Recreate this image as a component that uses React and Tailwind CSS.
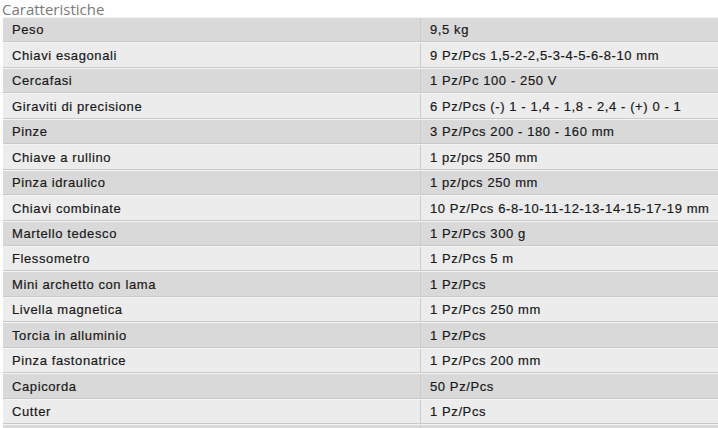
import React from 'react';

const rows = [
  ['Peso', '9,5 kg'],
  ['Chiavi esagonali', '9 Pz/Pcs 1,5-2-2,5-3-4-5-6-8-10 mm'],
  ['Cercafasi', '1 Pz/Pc 100 - 250 V'],
  ['Giraviti di precisione', '6 Pz/Pcs (-) 1 - 1,4 - 1,8 - 2,4 - (+) 0 - 1'],
  ['Pinze', '3 Pz/Pcs 200 - 180 - 160 mm'],
  ['Chiave a rullino', '1 pz/pcs 250 mm'],
  ['Pinza idraulico', '1 pz/pcs 250 mm'],
  ['Chiavi combinate', '10 Pz/Pcs 6-8-10-11-12-13-14-15-17-19 mm'],
  ['Martello tedesco', '1 Pz/Pcs 300 g'],
  ['Flessometro', '1 Pz/Pcs 5 m'],
  ['Mini archetto con lama', '1 Pz/Pcs'],
  ['Livella magnetica', '1 Pz/Pcs 250 mm'],
  ['Torcia in alluminio', '1 Pz/Pcs'],
  ['Pinza fastonatrice', '1 Pz/Pcs 200 mm'],
  ['Capicorda', '50 Pz/Pcs'],
  ['Cutter', '1 Pz/Pcs'],
  ['', ''],
];

const App = () => {
  return (
    <div className="w-[718px] h-[428px] overflow-hidden bg-white">
      <div className="pl-[2px] h-[17px] text-[15px] leading-[18px] text-[#7a7a7a] font-['Open_Sans',sans-serif]">
        Caratteristiche
      </div>
      <div className="ml-[3px] font-['Liberation_Sans',Arial,sans-serif] text-[13px] text-[#1a1a1a] tracking-[0.6px] [-webkit-text-stroke:0.2px_#1a1a1a]">
        {rows.map(([k, v], i) => (
          <div
            key={i}
            className={`flex h-[25.45px] border-t border-t-[#f4f4f4] border-b border-b-[#c9c9c9] ${i % 2 === 0 ? 'bg-[#d9d9d9]' : 'bg-[#ececec]'}`}
          >
            <div className="w-[418px] shrink-0 pl-[9px] pt-[1px] flex items-center border-r border-r-[#cdcdcd]">
              {k}
            </div>
            <div className="flex-1 pl-[9px] pt-[1px] flex items-center whitespace-nowrap">{v}</div>
          </div>
        ))}
      </div>
    </div>
  );
};

export default App;
